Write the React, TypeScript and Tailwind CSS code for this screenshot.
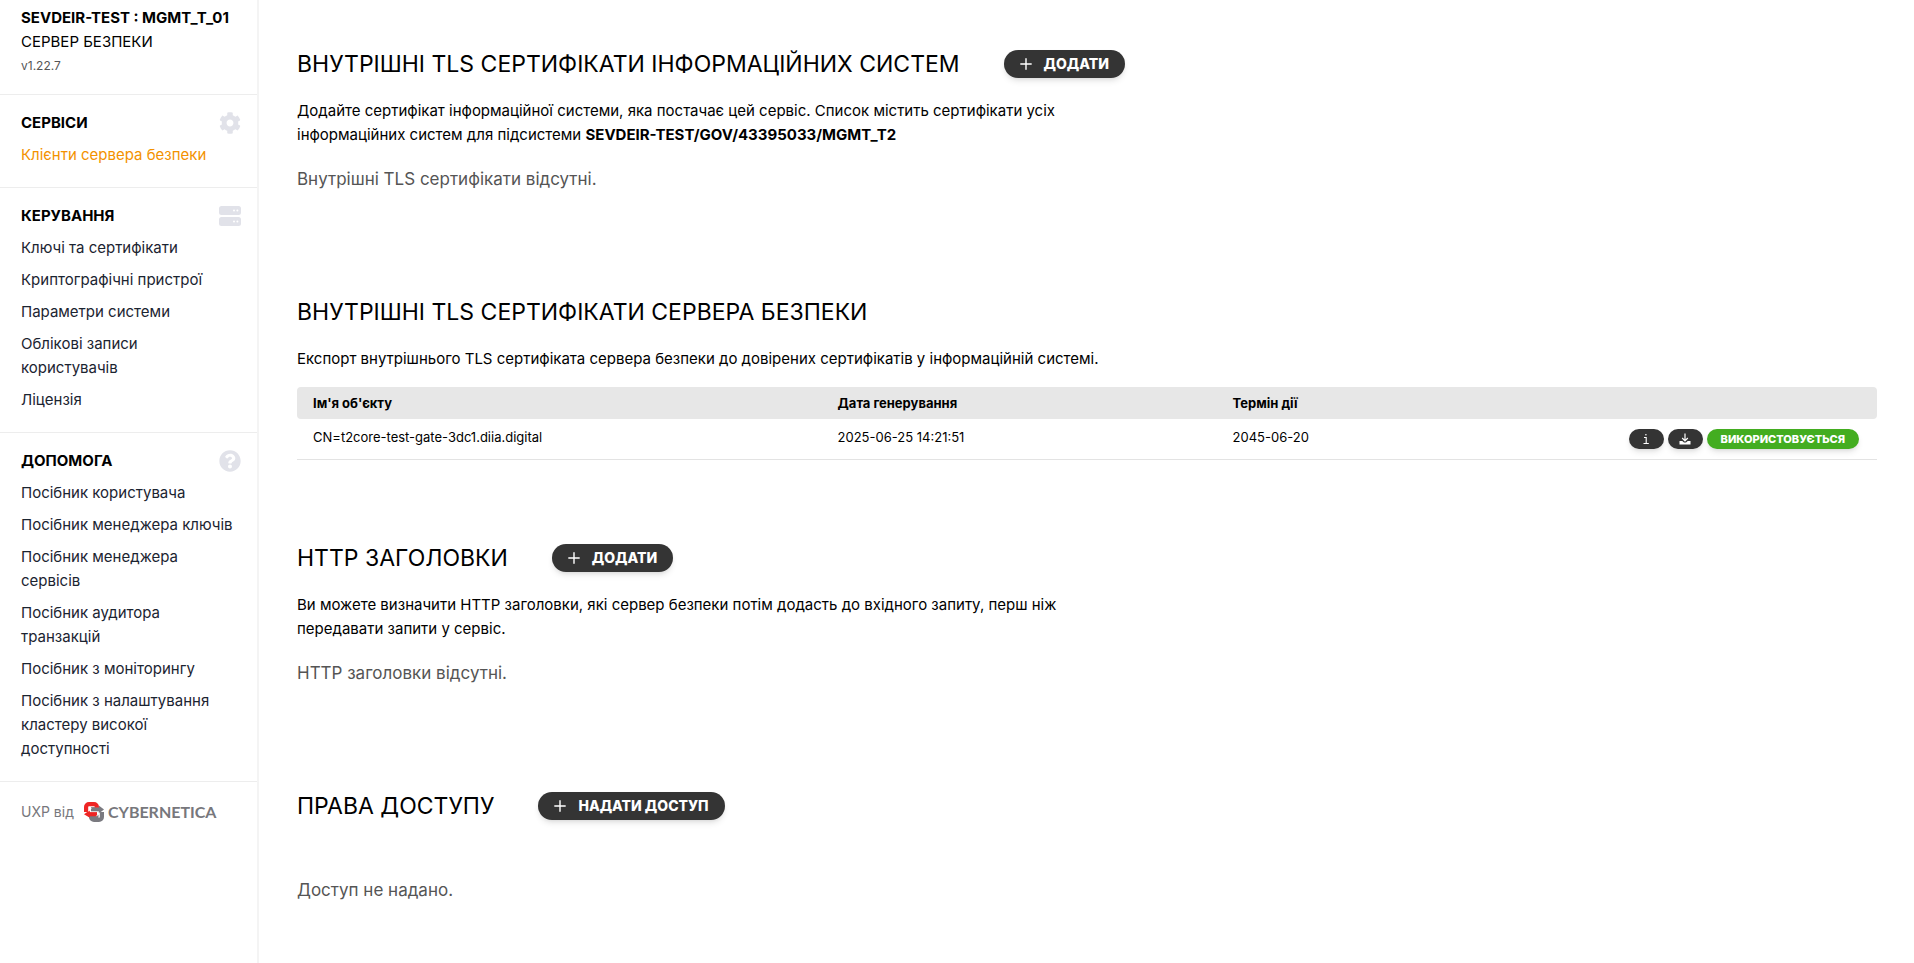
import type { ReactNode } from "react";
import { FaCog, FaQuestionCircle } from "react-icons/fa";

const manageLinks = ["Ключі та сертифікати", "Криптографічні пристрої", "Параметри системи", "Облікові записи користувачів", "Ліцензія"];
const helpLinks = [
  "Посібник користувача",
  "Посібник менеджера ключів",
  "Посібник менеджера сервісів",
  "Посібник аудитора транзакцій",
  "Посібник з моніторингу",
  "Посібник з налаштування кластеру високої доступності",
];

function ServerIcon() {
  return (
    <svg width="22" height="20" viewBox="0 0 22 20" fill="currentColor" aria-hidden="true">
      <rect width="22" height="9" rx="2.5" />
      <rect y="11" width="22" height="9" rx="2.5" />
      <g fill="#fff">
        <circle cx="15" cy="4.5" r="1" />
        <circle cx="18.4" cy="4.5" r="1" />
        <circle cx="15" cy="15.5" r="1" />
        <circle cx="18.4" cy="15.5" r="1" />
      </g>
    </svg>
  );
}

function LogoMark() {
  return (
    <svg width="20" height="20" viewBox="0 0 20 20" fill="none" aria-hidden="true">
      <g stroke="#7a7a80" strokeWidth="4.2">
        <path d="M7 7.200h9" />
        <path d="M17.900 10v5a2.900 2.900 0 0 1-2.900 2.900H10a2.900 2.900 0 0 1-2.900-2.900V14.800H14.500" />
      </g>
      <path d="M14.800 3.400 20 7.400l-5.200 4Z" fill="#7a7a80" />
      <g stroke="#ee2524" strokeWidth="4.200">
        <path d="M12.900 5.400V5a2.900 2.900 0 0 0-2.900-2.900H5A2.900 2.900 0 0 0 2.100 5v5" />
        <path d="M4 12.200h9" />
      </g>
      <path d="M5.800 8.200 0 12.200l5.800 3.600Z" fill="#ee2524" />
      <path d="M4.500 9.300 7.500 5.800M12.500 14.200l3-3.500" stroke="#fff" strokeWidth="1" />
    </svg>
  );
}

function PlusIcon() {
  return (
    <svg width="12" height="12" viewBox="0 0 12 12" stroke="currentColor" strokeWidth="1.4" strokeLinecap="round" aria-hidden="true">
      <path d="M6 .8v10.400M.8 6h10.400" />
    </svg>
  );
}

function NavSection({ title, icon, links, active = false }: { title: string; icon: ReactNode; links: string[]; active?: boolean }) {
  return (
    <section className="border-b border-[#ededed] pt-4 pr-4 pb-4 pl-[21px]">
      <div className="flex h-6 items-center justify-between">
        <h2 className="font-bold">{title}</h2>
        <span className="text-[#e1e2e9]">{icon}</span>
      </div>
      <ul className="mt-1 pr-[5px]">
        {links.map((l) => (
          <li key={l} className="py-1">
            <a href="#" className={active ? "block text-[#f39200]" : "block text-[#1b2431]"}>{l}</a>
          </li>
        ))}
      </ul>
    </section>
  );
}

function ActionHeading({ title, action }: { title: string; action?: string }) {
  return (
    <div className="flex h-8 items-center gap-11">
      <h1 className="text-[23px]">{title}</h1>
      {action && (
        <button type="button" className="flex h-7 items-center gap-3 rounded-full bg-[#343434] px-4 text-sm font-extrabold text-white shadow-md">
          <PlusIcon />
          {action}
        </button>
      )}
    </div>
  );
}

export default function App() {
  return (
    <div className="flex min-h-screen bg-white font-['Inter',sans-serif] text-[15px] leading-6 text-black">
      <aside className="w-[259px] shrink-0 border-r-2 border-[#f4f4f4]">
        <header className="border-b border-[#ededed] pt-[6px] pb-4 pl-[21px]">
          <p className="font-bold">SEVDEIR-TEST : MGMT_T_01</p>
          <p>СЕРВЕР БЕЗПЕКИ</p>
          <p className="text-xs leading-6 text-[#555]">v1.22.7</p>
        </header>
        <nav>
          <NavSection title="СЕРВІСИ" icon={<FaCog size={22} />} links={["Клієнти сервера безпеки"]} active />
          <NavSection title="КЕРУВАННЯ" icon={<ServerIcon />} links={manageLinks} />
          <NavSection title="ДОПОМОГА" icon={<FaQuestionCircle size={22} />} links={helpLinks} />
        </nav>
        <footer className="flex items-center pt-[18px] pl-[21px] text-[#77777c]">
          <span className="text-sm leading-6">UXP від</span>
          <a href="#" className="ml-[10px] flex items-center gap-1 font-['Lato',sans-serif] text-base font-bold">
            <LogoMark />
            CYBERNETICA
          </a>
        </footer>
      </aside>
      <main className="min-w-0 flex-1 pt-12 pr-[37px] pl-[38px]">
        <section className="h-[248px]">
          <ActionHeading title="ВНУТРІШНІ TLS СЕРТИФІКАТИ ІНФОРМАЦІЙНИХ СИСТЕМ" action="ДОДАТИ" />
          <p className="mt-[19px] max-w-[780px]">
            Додайте сертифікат інформаційної системи, яка постачає цей сервіс. Список містить сертифікати усіх інформаційних систем для підсистеми{" "}
            <strong>SEVDEIR-TEST/GOV/43395033/MGMT_T2</strong>
          </p>
          <p className="mt-5 text-[17px] text-[#555]">Внутрішні TLS сертифікати відсутні.</p>
        </section>
        <section className="h-[246px]">
          <ActionHeading title="ВНУТРІШНІ TLS СЕРТИФІКАТИ СЕРВЕРА БЕЗПЕКИ" />
          <p className="mt-[19px]">Експорт внутрішнього TLS сертифіката сервера безпеки до довірених сертифікатів у інформаційній системі.</p>
          <table className="mt-4 w-full table-fixed text-left text-[13px]">
            <thead>
              <tr className="h-8 bg-[#e7e7e7]">
                <th className="w-[33.2%] rounded-l px-4">Ім'я об'єкту</th>
                <th className="w-[25%] px-4">Дата генерування</th>
                <th className="px-4">Термін дії</th>
                <th className="rounded-r px-4" aria-label="Дії" />
              </tr>
            </thead>
            <tbody>
              <tr className="h-10 border-b border-[#e3e3e3]">
                <td className="px-4 pb-1">CN=t2core-test-gate-3dc1.diia.digital</td>
                <td className="px-4 pb-1">2025-06-25 14:21:51</td>
                <td className="px-4 pb-1">2045-06-20</td>
                <td className="pr-[18px]">
                  <div className="flex justify-end gap-1">
                    <button type="button" aria-label="Інформація" className="flex h-5 w-[35px] items-center justify-center rounded-full bg-[#343434] text-white shadow-md">
                      <svg width="8" height="12" viewBox="0 0 8 12" fill="none" stroke="currentColor" strokeWidth="1.100" aria-hidden="true">
                        <path d="M2 4.500h2.200v6M1.500 10.500h5.300" />
                        <circle cx="3.900" cy="1.700" r=".8" fill="currentColor" stroke="none" />
                      </svg>
                    </button>
                    <button type="button" aria-label="Завантажити" className="flex h-5 w-[35px] items-center justify-center rounded-full bg-[#343434] text-white shadow-md">
                      <svg width="12" height="12" viewBox="0 0 12 12" fill="none" stroke="currentColor" aria-hidden="true">
                        <path d="M6 .5v7M3.200 5 6 7.800 8.800 5" strokeWidth="1.200" />
                        <path d="M.5 8h2.800L5 9.500h2L8.700 8h2.800v3.500H.5Z" fill="currentColor" stroke="none" />
                      </svg>
                    </button>
                    <button type="button" className="h-5 rounded-full bg-[#43ad20] px-[14px] text-[11px] leading-5 font-extrabold text-white shadow-md">ВИКОРИСТОВУЄТЬСЯ</button>
                  </div>
                </td>
              </tr>
            </tbody>
          </table>
        </section>
        <section className="h-[248px]">
          <ActionHeading title="HTTP ЗАГОЛОВКИ" action="ДОДАТИ" />
          <p className="mt-[19px] max-w-[780px]">
            Ви можете визначити HTTP заголовки, які сервер безпеки потім додасть до вхідного запиту, перш ніж передавати запити у сервіс.
          </p>
          <p className="mt-5 text-[17px] text-[#555]">HTTP заголовки відсутні.</p>
        </section>
        <section>
          <ActionHeading title="ПРАВА ДОСТУПУ" action="НАДАТИ ДОСТУП" />
          <p className="mt-14 text-[17px] text-[#555]">Доступ не надано.</p>
        </section>
      </main>
    </div>
  );
}
